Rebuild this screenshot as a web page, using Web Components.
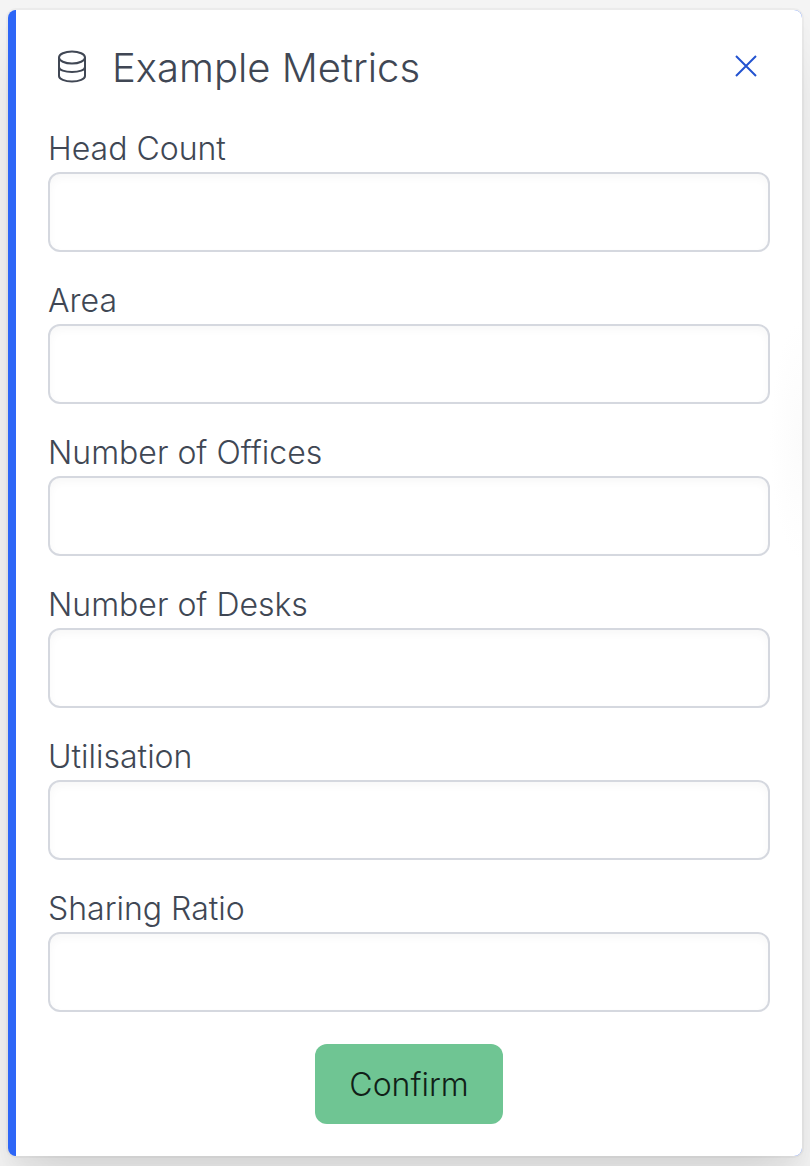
<!DOCTYPE html>
<html lang="en">
<head>
<meta charset="utf-8">
<meta name="viewport" content="width=device-width, initial-scale=1">
<title>Example Metrics</title>
<style>
  body {
    margin: 0;
    padding: 10px 8px;
    background: #f4f4f4;
    color: #404754;
    font-family: Inter, "Liberation Sans", sans-serif;
    font-size: 32px;
    overflow-x: hidden;
  }
</style>
</head>
<body>
<metrics-panel>
  <panel-header slot="header">Example Metrics</panel-header>
  <metric-field label="Head Count" name="head-count"></metric-field>
  <metric-field label="Area" name="area"></metric-field>
  <metric-field label="Number of Offices" name="offices"></metric-field>
  <metric-field label="Number of Desks" name="desks"></metric-field>
  <metric-field label="Utilisation" name="utilisation"></metric-field>
  <metric-field label="Sharing Ratio" name="sharing-ratio"></metric-field>
  <confirm-button slot="footer">Confirm</confirm-button>
</metrics-panel>

<script>
class BaseElement extends HTMLElement {
  render(html) {
    this.attachShadow({ mode: 'open' }).innerHTML = html;
  }
}

customElements.define('metrics-panel', class extends BaseElement {
  constructor() {
    super();
    this.render(`
      <style>
        :host {
          display: block;
          box-sizing: border-box;
          padding: 32px;
          border-left: 8px solid #2d66f7;
          border-radius: 8px;
          background: radial-gradient(ellipse 32px 120px at 100% 430px, #fbfbfb, #fff) padding-box, #2d66f7;
          box-shadow: 0 0 0 2px rgba(0, 0, 0, .03), 0 40px 50px -10px rgba(0, 0, 0, .1), 0 10px 20px rgba(0, 0, 0, .04);
        }
        .fields { display: grid; gap: 26px; margin: 32px 0; }
        footer { display: flex; justify-content: center; }
      </style>
      <slot name="header"></slot>
      <div class="fields"><slot></slot></div>
      <footer><slot name="footer"></slot></footer>`);
  }
});

customElements.define('panel-header', class extends BaseElement {
  constructor() {
    super();
    this.render(`
      <style>
        :host { display: flex; align-items: center; height: 52px; padding: 0 8px; }
        h1 { flex: 1; margin: 0 0 0 24px; font-size: 40px; line-height: 52px; font-weight: 300; }
        svg { display: block; fill: none; stroke: currentColor; }
        button { padding: 0; border: 0; background: none; color: #2353d0; cursor: pointer; }
      </style>
      <svg width="32" height="36" viewBox="0 0 32 36" stroke-width="2" aria-hidden="true">
        <ellipse cx="16" cy="7.500" rx="13" ry="6"/>
        <path d="M3 7.500V26c0 3 5.800 5.500 13 5.500S29 29 29 26V7.500M3 17c0 3 5.800 5 13 5s13-2 13-5"/>
      </svg>
      <h1><slot></slot></h1>
      <button type="button" aria-label="Close">
        <svg width="32" height="36" viewBox="0 0 32 36" stroke-width="2" aria-hidden="true">
          <path d="M6 6 26 26M26 6 6 26"/>
        </svg>
      </button>`);
  }
});

customElements.define('metric-field', class extends BaseElement {
  connectedCallback() {
    if (this.shadowRoot) return;
    this.render(`
      <style>
        :host { display: block; }
        label { display: block; line-height: 46px; font-weight: 300; }
        input {
          display: block;
          box-sizing: border-box;
          width: 100%;
          height: 80px;
          padding: 0 24px;
          border: 2px solid #d5d8df;
          border-radius: 12px;
          background: #fff;
          box-shadow: inset 0 4px 8px rgba(0, 0, 0, .03);
          color: inherit;
          font: inherit;
        }
      </style>
      <label for="field"></label>
      <input id="field" type="text">`);
    this.shadowRoot.querySelector('label').textContent = this.getAttribute('label');
    this.shadowRoot.querySelector('input').name = this.getAttribute('name');
  }
});

customElements.define('confirm-button', class extends BaseElement {
  constructor() {
    super();
    this.render(`
      <style>
        :host { display: block; }
        button {
          display: block;
          height: 80px;
          padding: 0 34px;
          border: 0;
          border-radius: 12px;
          background: #6fc593;
          color: #111f18;
          font: inherit;
          font-weight: 300;
          cursor: pointer;
        }
      </style>
      <button type="button"><slot></slot></button>`);
  }
});
</script>
</body>
</html>
